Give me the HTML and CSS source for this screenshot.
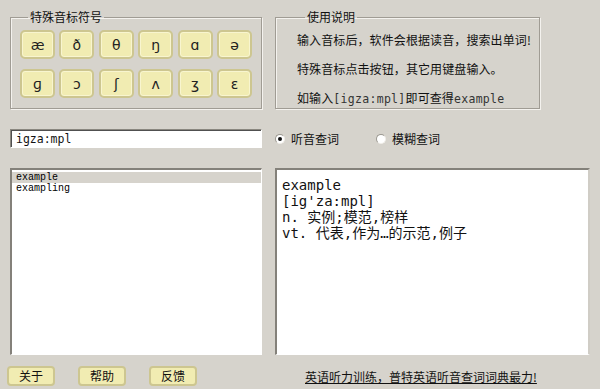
FILE: index.html
```html
<!DOCTYPE html>
<html lang="zh-CN">
<head>
<meta charset="utf-8">
<title>听音查词</title>
<link rel="stylesheet" href="styles.css">
</head>
<body>
<div class="app">
  <div class="main">
    <fieldset class="group symbols">
      <legend>特殊音标符号</legend>
      <div class="keys">
        <button class="key">æ</button>
        <button class="key">ð</button>
        <button class="key">θ</button>
        <button class="key">ŋ</button>
        <button class="key">ɑ</button>
        <button class="key">ə</button>
        <button class="key">ɡ</button>
        <button class="key">ɔ</button>
        <button class="key">ʃ</button>
        <button class="key">ʌ</button>
        <button class="key">ʒ</button>
        <button class="key">ɛ</button>
      </div>
    </fieldset>
    <fieldset class="group help">
      <legend>使用说明</legend>
      <p>输入音标后，软件会根据读音，搜索出单词!</p>
      <p>特殊音标点击按钮，其它用键盘输入。</p>
      <p>如输入<span class="lat">[igza:mpl]</span>即可查得<span class="lat">example</span></p>
    </fieldset>

    <div class="input">igza:mpl</div>
    <div class="radios">
      <label class="radio"><span class="dot on"></span>听音查词</label>
      <label class="radio second"><span class="dot"></span>模糊查词</label>
    </div>

    <div class="list">
      <div class="item sel">example</div>
      <div class="item">exampling</div>
    </div>
    <div class="result">
      <div>example</div>
      <div>[ig'za:mpl]</div>
      <div>n. 实例;模范,榜样</div>
      <div>vt. 代表,作为…的示范,例子</div>
    </div>
  </div>
  <div class="footer">
    <div class="btns">
      <button class="fbtn">关于</button>
      <button class="fbtn">帮助</button>
      <button class="fbtn">反馈</button>
    </div>
    <a class="link" href="#">英语听力训练，普特英语听音查词词典最力!</a>
  </div>
</div>
</body>
</html>
```
FILE: styles.css
```css
html, body {
  margin: 0;
  padding: 0;
  background: #d6d3cc;
  width: 600px;
  height: 389px;
  overflow: hidden;
}
body {
  font-family: "Noto Sans CJK SC", "Liberation Sans", sans-serif;
  font-size: 12px;
  color: #111;
}
.app {
  padding-top: 10px;
}
.main {
  display: grid;
  grid-template-columns: 252px 315px;
  grid-template-rows: 99px 19px 187px;
  column-gap: 13px;
  row-gap: 20px;
  padding-left: 10px;
}
.group {
  margin: 0;
  border: 1px solid #a09c94;
  box-shadow: inset 1px 1px 0 #f4f2ee, 1px 1px 0 #f4f2ee;
  padding: 0;
  min-width: 0;
}
.group legend {
  padding: 0 2px;
  margin-left: 8px;
  font-size: 12px;
  line-height: 14px;
  color: #111;
}
.symbols {
  padding: 6px 0 0 9px;
}
.keys {
  display: grid;
  grid-template-columns: repeat(6, 35px);
  grid-auto-rows: 29px;
  column-gap: 4.4px;
  row-gap: 10px;
}
.key {
  margin: 0;
  padding: 0;
  background: #f1ecb2;
  border: 2px solid #cdc690;
  border-radius: 5px;
  box-shadow: inset 0 0 0 1px #f8f5cf;
  font-family: "DejaVu Sans", sans-serif;
  font-size: 14px;
  color: #222;
}
.help {
  width: 265px;
  box-sizing: border-box;
  padding: 1px 0 0 21px;
}
.help p {
  margin: 0;
  line-height: 29px;
  font-size: 12px;
  letter-spacing: 0.1px;
  white-space: nowrap;
}
.lat {
  font-family: "DejaVu Sans Mono", monospace;
  font-size: 11.5px;
  letter-spacing: 0.3px;
  color: #333;
}
.input {
  box-sizing: border-box;
  height: 19px;
  background: #fff;
  border-top: 1px solid #8a877f;
  border-left: 1px solid #8a877f;
  border-right: 1px solid #fff;
  border-bottom: 1px solid #fff;
  box-shadow: inset 1px 1px 0 #505050;
  padding: 1px 0 0 5px;
  font-family: "DejaVu Sans Mono", monospace;
  font-size: 11.5px;
  line-height: 16px;
  color: #111;
}
.radios {
  display: flex;
  align-items: center;
  height: 19px;
}
.radio {
  display: flex;
  align-items: center;
  gap: 6px;
  font-size: 12px;
}
.radio.second {
  margin-left: 37px;
}
.dot {
  width: 10px;
  height: 10px;
  border-radius: 50%;
  background: #fff;
  border: 1px solid #9a978f;
  border-right-color: #f0eee8;
  border-bottom-color: #f0eee8;
  box-sizing: border-box;
  display: flex;
  align-items: center;
  justify-content: center;
}
.dot.on::after {
  content: "";
  width: 4px;
  height: 4px;
  border-radius: 50%;
  background: #111;
}
.list {
  box-sizing: border-box;
  background: #fff;
  border-top: 2px solid #84817a;
  border-left: 2px solid #84817a;
  border-right: 1px solid #fff;
  border-bottom: 1px solid #fff;
  padding: 2px 0 0 0;
}
.item {
  font-family: "Liberation Mono", monospace;
  font-size: 10px;
  line-height: 11px;
  height: 11px;
  padding-left: 4px;
  color: #000;
}
.item.sel {
  background: #d6d3cc;
}
.result {
  box-sizing: border-box;
  background: #fff;
  border-top: 2px solid #84817a;
  border-left: 2px solid #84817a;
  border-right: 2px solid #d0cdc6;
  border-bottom: 1px solid #fff;
  padding: 7px 0 0 5px;
  font-family: "DejaVu Sans Mono", "Noto Sans CJK SC", monospace;
  font-size: 14px;
  line-height: 16px;
  color: #111;
}
.footer {
  display: flex;
  align-items: center;
  margin-top: 11px;
  padding-left: 7px;
  height: 20px;
}
.btns {
  display: flex;
  gap: 23px;
}
.fbtn {
  margin: 0;
  padding: 0;
  width: 48px;
  height: 20px;
  background: #f1ecb2;
  border: 2px solid #cdc690;
  border-radius: 4px;
  font-family: "Noto Sans CJK SC", sans-serif;
  font-size: 12px;
  line-height: 14px;
  color: #111;
}
.link {
  margin-left: 108px;
  font-size: 12px;
  color: #111;
  text-decoration: underline;
  white-space: nowrap;
}
```
